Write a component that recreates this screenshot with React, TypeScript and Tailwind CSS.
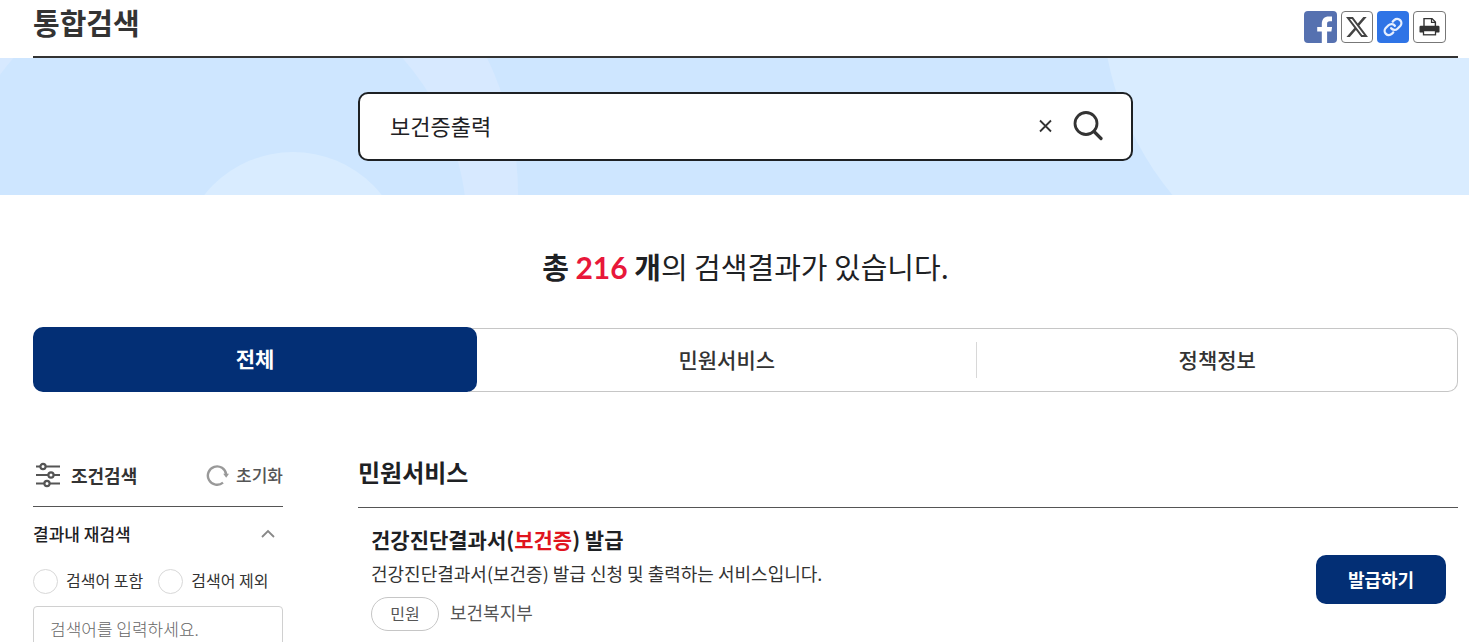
import React, { useState } from "react";

const iconButton = "flex h-8 items-center justify-center overflow-hidden rounded-sm";

function ShareLinks() {
  return (
    <div className="mr-3 mb-0.5 flex gap-1">
      <button type="button" aria-label="페이스북 공유" className={`${iconButton} w-[33px] bg-[#5671b0]`}>
        <svg viewBox="0 0 32 32" className="size-8" aria-hidden="true">
          <path
            d="M16.8 32V20.5h-4.6v-4.6h4.6v-3.1c0-4.9 2.7-7.4 7-7.4 1.4 0 2.6.1 3.2.2v4.6h-2.2c-2.2 0-2.7 1-2.7 2.7v3h5l-.7 4.6h-4.3V32z"
            fill="#fff"
          />
        </svg>
      </button>
      <button type="button" aria-label="X 공유" className={`${iconButton} w-8 border border-[#777] bg-white`}>
        <svg viewBox="0 0 24 24" className="size-[22px] shrink-0" aria-hidden="true">
          <path
            d="M18.901 1.153h3.68l-8.04 9.19L24 22.846h-7.406l-5.8-7.584-6.638 7.584H.474l8.6-9.83L0 1.154h7.594l5.243 6.932ZM17.61 20.644h2.039L6.486 3.24H4.298Z"
            fill="#444"
          />
        </svg>
      </button>
      <button type="button" aria-label="주소 복사" className={`${iconButton} w-8 bg-[#2f74e6]`}>
        <svg viewBox="0 0 24 24" className="size-[22px]" aria-hidden="true">
          <g fill="none" stroke="#e6efff" strokeWidth="2.5" strokeLinecap="round">
            <path d="M10 13.4a4.6 4.6 0 0 0 6.9.5l3-3a4.6 4.6 0 0 0-6.5-6.5l-1.7 1.7" />
            <path d="M14 10.6a4.6 4.6 0 0 0-6.9-.5l-3 3a4.6 4.6 0 0 0 6.5 6.5l1.7-1.7" />
          </g>
        </svg>
      </button>
      <button type="button" aria-label="인쇄" className={`${iconButton} w-[33px] border border-[#777] bg-white`}>
        <svg viewBox="0 0 24 24" className="size-6 shrink-0" aria-hidden="true">
          <path d="M6 11V3.6h8l3.4 3.4V11" fill="none" stroke="#333" strokeWidth="1.4" />
          <path d="M13.5 3.6v3.8h3.9" fill="none" stroke="#333" strokeWidth="1.2" />
          <rect x="1.5" y="10.8" width="20" height="6.8" rx="1.2" fill="#333" />
          <rect x="5.5" y="15.6" width="12" height="4.2" fill="#fff" stroke="#333" strokeWidth="1.3" />
        </svg>
      </button>
    </div>
  );
}

function SearchBand() {
  const [query, setQuery] = useState("보건증출력");
  return (
    <section className="relative bg-[#cee6ff] py-[34px] pr-[11px] pl-[33px]">
      <svg
        className="absolute inset-0 size-full"
        viewBox="0 0 1469 137"
        preserveAspectRatio="xMidYMid slice"
        aria-hidden="true"
      >
        <circle cx="208" cy="135" r="310" fill="#d7e9ff" />
        <circle cx="208" cy="171" r="259" fill="#cee6ff" />
        <circle cx="293" cy="207" r="113" fill="#d9ecff" />
        <circle cx="1407" cy="-58" r="305" fill="#d9ecff" />
      </svg>
      <form
        role="search"
        onSubmit={(e) => e.preventDefault()}
        className="relative mx-auto flex h-[69px] w-full max-w-[775px] items-center rounded-[10px] border-2 border-[#1e2124] bg-white pr-7 pb-0.5 pl-[30px]"
      >
        <input
          type="text"
          aria-label="검색어"
          value={query}
          onChange={(e) => setQuery(e.target.value)}
          className="min-w-0 flex-1 bg-transparent text-[22px] text-[#1e2124] outline-none"
        />
        <button type="button" aria-label="지우기" onClick={() => setQuery("")} className="mr-5">
          <svg viewBox="0 0 14 14" className="size-[14px]" aria-hidden="true">
            <path d="M1 1.5l11 11M12 1.5l-11 11" stroke="#333" strokeWidth="1.8" />
          </svg>
        </button>
        <button type="submit" aria-label="검색">
          <svg viewBox="0 0 30 30" className="size-[30px]" aria-hidden="true">
            <circle cx="13" cy="12.5" r="11" fill="none" stroke="#333" strokeWidth="2.8" />
            <path d="M21 20.5l7 7" stroke="#333" strokeWidth="3.2" strokeLinecap="round" />
          </svg>
        </button>
      </form>
    </section>
  );
}

function ResultTabs() {
  return (
    <div role="tablist" className="flex h-[65px] text-[21px] font-medium text-[#333]">
      <button
        type="button"
        role="tab"
        aria-selected="true"
        className="z-10 -mr-2 flex-[444] rounded-[10px] bg-[#032f75] pb-0.5 font-bold text-white"
      >
        전체
      </button>
      <div className="mt-px flex flex-[980] items-center rounded-r-[10px] border border-l-0 border-[#c6c6c6] pl-2">
        <button type="button" role="tab" aria-selected="false" className="h-9 flex-[500] border-r border-[#d8d8d8]">
          민원서비스
        </button>
        <button type="button" role="tab" aria-selected="false" className="h-9 flex-[480]">
          정책정보
        </button>
      </div>
    </div>
  );
}

function FilterPanel() {
  const radio =
    "size-[25px] shrink-0 appearance-none rounded-full border border-[#d8d8d8] bg-white checked:border-8 checked:border-[#032f75]";
  return (
    <aside className="w-[250px] shrink-0">
      <div className="flex h-[55px] items-center justify-between border-b border-[#555] pb-2">
        <h2 className="flex items-center gap-2 text-[18px] font-bold text-[#333]">
          <svg viewBox="0 0 30 26" className="h-[26px] w-[30px]" aria-hidden="true">
            <g fill="none" stroke="#555" strokeWidth="2.2">
              <path d="M3 4.5h4.4M12.6 4.5H27M3 13h12.4M20.6 13H27M3 21.5h8.4M16.6 21.5H27" />
              <circle cx="10" cy="4.5" r="2.6" />
              <circle cx="18" cy="13" r="2.6" />
              <circle cx="14" cy="21.5" r="2.6" />
            </g>
          </svg>
          조건검색
        </h2>
        <button type="button" className="flex items-center gap-1.5 text-[17px] font-medium text-[#555]">
          <svg viewBox="0 0 24 24" className="size-6" aria-hidden="true">
            <path d="M17 19.6A9.2 9.2 0 1 1 20.2 11.5" fill="none" stroke="#999" strokeWidth="2.4" />
            <path d="M17.2 10.8h5.8l-2.8 4z" fill="#999" />
          </svg>
          초기화
        </button>
      </div>
      <div className="flex h-[54px] items-center justify-between pr-2">
        <h3 className="text-[17px] font-medium text-[#1e2124]">결과내 재검색</h3>
        <button type="button" aria-label="접기">
          <svg viewBox="0 0 14 10" className="h-[10px] w-[14px]" aria-hidden="true">
            <path d="M1 8l6-6 6 6" fill="none" stroke="#888" strokeWidth="1.8" />
          </svg>
        </button>
      </div>
      <div className="mt-2 flex h-[25px] gap-[15px] text-[16px] text-[#333]">
        <label className="flex items-center gap-2">
          <input type="radio" name="scope" className={radio} />
          <span className="pb-1">검색어 포함</span>
        </label>
        <label className="flex items-center gap-2">
          <input type="radio" name="scope" className={radio} />
          <span className="pb-1">검색어 제외</span>
        </label>
      </div>
      <input
        type="text"
        aria-label="결과내 검색어"
        placeholder="검색어를 입력하세요."
        className="mt-3 h-12 w-full rounded-sm border border-[#d0d0d0] px-4 pb-1 text-[17px] font-light text-[#333] outline-none placeholder:text-[#666]"
      />
    </aside>
  );
}

function ServiceResults() {
  return (
    <main className="min-w-0 flex-1">
      <h2 className="h-[56px] border-b border-[#555] pt-1 text-[24px] leading-[32px] font-bold text-[#1e2124]">
        민원서비스
      </h2>
      <article className="flex items-center justify-between py-[14px] pr-3 pl-[13px]">
        <div>
          <h3 className="text-[21px] leading-[34px] font-bold text-[#1e2124]">
            <a href="#service">
              건강진단결과서(<em className="text-[#e0141e] not-italic">보건증</em>) 발급
            </a>
          </h3>
          <p className="text-[18px] leading-[34px] text-[#333]">
            건강진단결과서(보건증) 발급 신청 및 출력하는 서비스입니다.
          </p>
          <div className="mt-[7px] flex items-center gap-[11px] text-[18px] text-[#555]">
            <span className="flex h-[34px] w-[68px] items-center justify-center rounded-full border border-[#c6c6c6] pb-0.5 text-[16px]">
              민원
            </span>
            <span className="pb-1">보건복지부</span>
          </div>
        </div>
        <button
          type="button"
          className="mt-1.5 h-[49px] w-[130px] rounded-[10px] bg-[#032f75] text-[18px] font-bold text-white"
        >
          발급하기
        </button>
      </article>
    </main>
  );
}

export default function App() {
  return (
    <div className="overflow-x-hidden bg-white font-['Noto_Sans_CJK_KR',sans-serif]">
      <header className="mr-[11px] ml-[33px] flex h-[58px] items-center justify-between border-b-2 border-[#333]">
        <h1 className="pb-2.5 text-[29px] font-bold text-[#333]">통합검색</h1>
        <ShareLinks />
      </header>
      <SearchBand />
      <div className="mr-[11px] ml-[33px]">
        <p className="pt-[49px] pb-[38px] text-center text-[29px] leading-[44px] text-[#1e2124]">
          <strong>
            총 <span className="font-['Lato'] text-[30px] text-[#e8173a]">216</span> 개
          </strong>
          의 검색결과가 있습니다.
        </p>
        <ResultTabs />
        <div className="mt-[60px] flex gap-[75px]">
          <FilterPanel />
          <ServiceResults />
        </div>
      </div>
    </div>
  );
}
